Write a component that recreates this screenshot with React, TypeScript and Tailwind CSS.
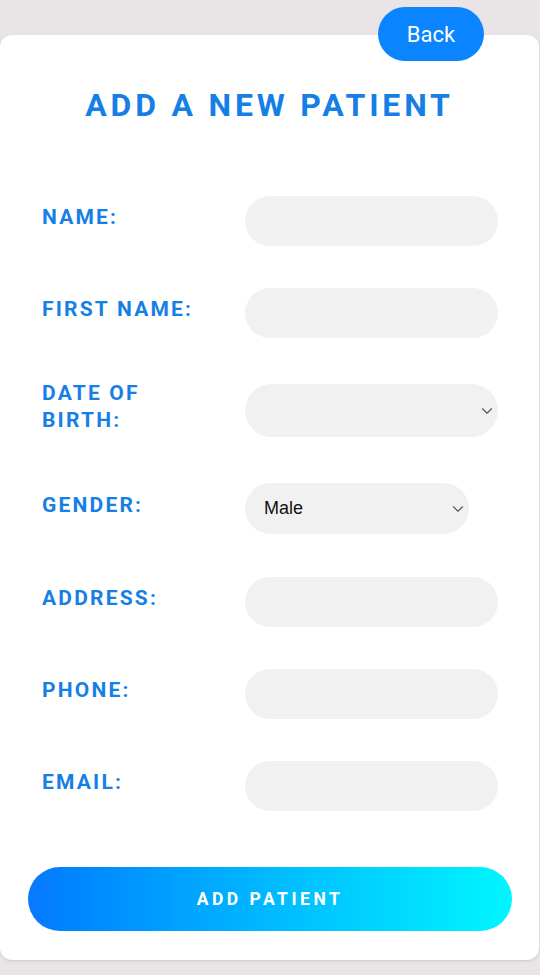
import { ChevronDown } from "lucide-react";

type Field = {
  label: string[];
  kind: "text" | "date" | "select";
  mt: string;
  h: string;
};

const fields: Field[] = [
  { label: ["NAME:"], kind: "text", mt: "mt-[0px]", h: "h-[50px]" },
  { label: ["FIRST NAME:"], kind: "text", mt: "mt-[42px]", h: "h-[50px]" },
  { label: ["DATE OF", "BIRTH:"], kind: "date", mt: "mt-[46px]", h: "h-[53px]" },
  { label: ["GENDER:"], kind: "select", mt: "mt-[46px]", h: "h-[51px]" },
  { label: ["ADDRESS:"], kind: "text", mt: "mt-[43px]", h: "h-[50px]" },
  { label: ["PHONE:"], kind: "text", mt: "mt-[42px]", h: "h-[50px]" },
  { label: ["EMAIL:"], kind: "text", mt: "mt-[42px]", h: "h-[50px]" },
];

function FieldRow({ field }: { field: Field }) {
  return (
    <div className={`flex items-center ${field.mt} ${field.h}`}>
      <label className="w-[203px] pb-[7px] text-[21px] leading-[27px] font-bold tracking-[2.2px] text-[#167fe6]">
        {field.label.map((line) => (
          <div key={line}>{line}</div>
        ))}
      </label>
      {field.kind === "text" && (
        <input
          type="text"
          className="h-full w-[253px] rounded-full bg-[#f1f1f1] px-5 outline-none"
        />
      )}
      {field.kind === "date" && (
        <div className="flex h-full w-[253px] items-center justify-end rounded-full bg-[#f1f1f1] pr-[2px]">
          <ChevronDown className="h-[18px] w-[18px] text-[#555]" strokeWidth={1.5} />
        </div>
      )}
      {field.kind === "select" && (
        <div className="flex h-full w-[224px] items-center justify-between rounded-full bg-[#f1f1f1] pl-[19px] pr-[2px]">
          <span className="font-['Liberation_Sans',Arial,sans-serif] text-[18px] text-[#111]">Male</span>
          <ChevronDown className="h-[18px] w-[18px] text-[#555]" strokeWidth={1.5} />
        </div>
      )}
    </div>
  );
}

export default function App() {
  return (
    <div className="relative h-[975px] w-[540px] bg-[#e9e4e5] pt-[35px] font-['Roboto',sans-serif]">
      <div className="h-[925px] w-[539px] rounded-[12px] bg-white pt-[50px] shadow-sm">
        <h1 className="text-center text-[32px] leading-[40px] font-bold tracking-[3.8px] text-[#167fe6]">
          ADD A NEW PATIENT
        </h1>

        <form className="mt-[71px] pl-[42px]" onSubmit={(e) => e.preventDefault()}>
          {fields.map((field) => (
            <FieldRow key={field.label.join(" ")} field={field} />
          ))}
        </form>

        <div className="mt-[56px] px-[28px]">
          <button
            type="submit"
            className="h-[64px] w-[484px] rounded-full bg-gradient-to-r from-[#0a78ff] to-[#00f6ff] text-[17.5px] font-bold tracking-[3.5px] text-white"
          >
            ADD PATIENT
          </button>
        </div>
      </div>

      <button className="absolute top-[7px] left-[378px] h-[54px] w-[106px] rounded-full bg-[#0a84ff] text-[22px] text-white">
        Back
      </button>
    </div>
  );
}
